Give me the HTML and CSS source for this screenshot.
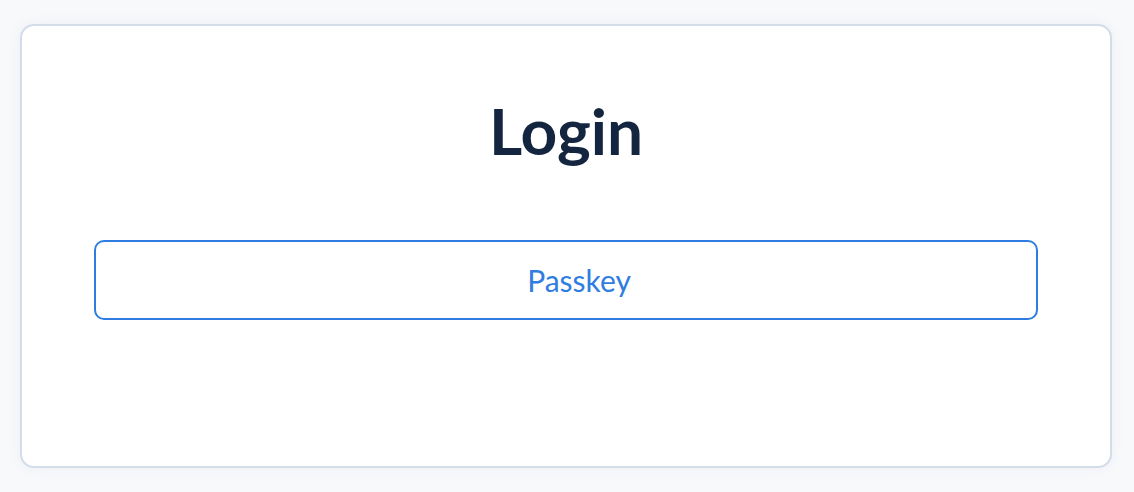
FILE: index.html
```html
<!DOCTYPE html>
<html lang="en">
<head>
<meta charset="utf-8">
<title>Login</title>
<link rel="stylesheet" href="styles.css">
</head>
<body>
<main class="card">
  <h1 class="title">Login</h1>
  <button class="passkey" type="button">Passkey</button>
</main>
</body>
</html>
```
FILE: styles.css
```css
html, body {
  margin: 0;
  padding: 0;
  background: #f8f9fb;
}
body {
  padding: 24px 22px 24px 20px;
  font-family: Lato, "Noto Sans", sans-serif;
}
.card {
  box-sizing: border-box;
  width: 1092px;
  height: 444px;
  background: #ffffff;
  border: 2px solid #d3ddea;
  border-radius: 14px;
  box-shadow: 0 0 12px rgba(200, 210, 225, 0.25);
  padding: 73px 72px 0;
  display: flex;
  flex-direction: column;
}
.title {
  margin: 0;
  font-size: 64px;
  line-height: 64px;
  font-weight: 700;
  color: #14263f;
  text-align: center;
}
.passkey {
  margin-top: 77px;
  height: 80px;
  width: 100%;
  padding: 0 0 0 26px;
  background: #ffffff;
  border: 2px solid #2f7de1;
  border-radius: 10px;
  color: #2f7de1;
  font-family: Lato, "Noto Sans", sans-serif;
  font-size: 30px;
  font-weight: 400;
  cursor: pointer;
}
```
